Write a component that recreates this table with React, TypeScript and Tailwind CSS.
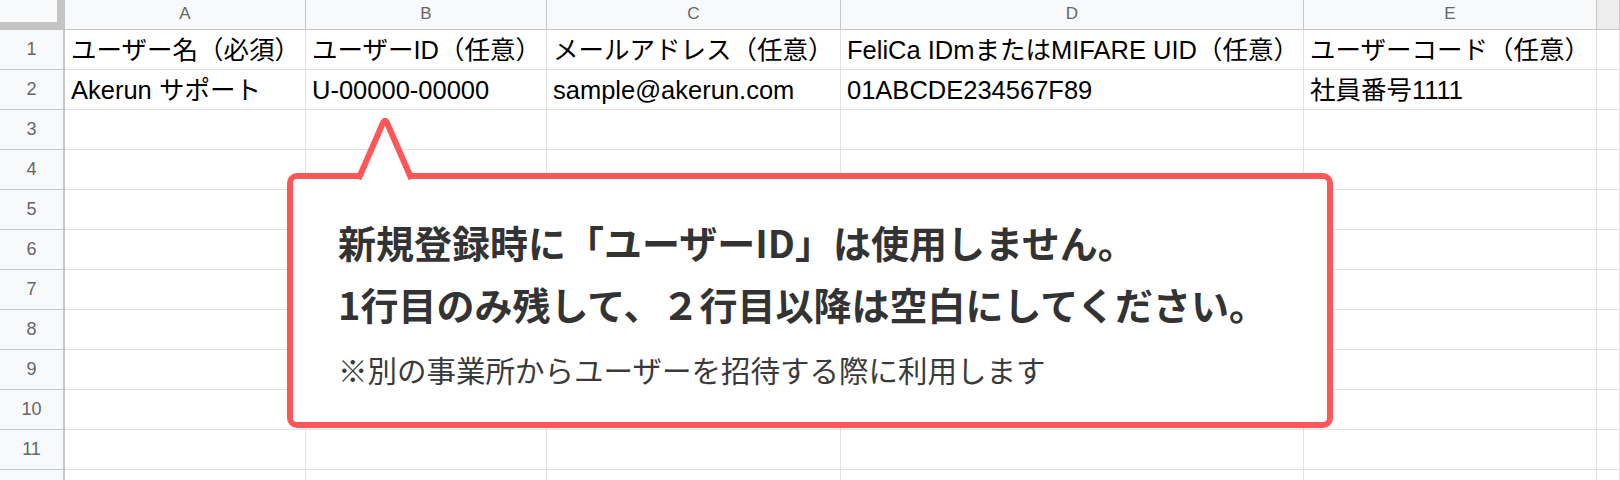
import React from "react";

const columns = ["A", "B", "C", "D", "E", ""];

const data: string[][] = [
  [
    "ユーザー名（必須）",
    "ユーザーID（任意）",
    "メールアドレス（任意）",
    "FeliCa IDmまたはMIFARE UID（任意）",
    "ユーザーコード（任意）",
    "",
  ],
  ["Akerun サポート", "U-00000-00000", "sample@akerun.com", "01ABCDE234567F89", "社員番号1111", ""],
];

const rowCount = 12;

const Sheet = () => {
  const rows = Array.from({ length: rowCount }, (_, i) => data[i] ?? ["", "", "", "", "", ""]);

  return (
    <div className="grid grid-cols-[65px_241px_241px_294px_463px_293px_1fr] font-['Liberation_Sans','Noto_Sans_CJK_JP',sans-serif]">
      {/* corner */}
      <div className="h-[30px] bg-[#f8f9fa] border-r-[8px] border-b-[8px] border-[#c4c4c4]" />
      {columns.map((c, i) => (
        <div
          key={c + i}
          className={`h-[30px] border-r border-b border-[#c7c7c7] text-center text-[17px] leading-[27px] text-[#666666] ${
            i === 5 ? "bg-[#ededed]" : "bg-[#f8f9fa]"
          }`}
        >
          {c}
        </div>
      ))}

      {rows.map((row, r) => (
        <React.Fragment key={r}>
          <div className="h-[40px] bg-[#f8f9fa] border-r-2 border-b border-[#c7c7c7] text-center text-[18px] leading-[39px] text-[#666666]">
            {r + 1}
          </div>
          {row.map((cell, c) => (
            <div
              key={c}
              className="h-[40px] border-r border-b border-[#e2e2e2] pl-[6px] pt-[1px] text-[25.5px] leading-[38px] text-black whitespace-nowrap overflow-hidden"
            >
              {cell}
            </div>
          ))}
        </React.Fragment>
      ))}
    </div>
  );
};

const Callout = () => {
  return (
    <>
      <div className="absolute left-[287px] top-[173px] w-[1046px] h-[255px] bg-white border-[6px] border-[#ff5757] rounded-[10px] pl-[45px] pt-[32px] font-['Noto_Sans_CJK_JP',sans-serif]">
        <p className="text-[38px] leading-[62px] font-bold text-[#333333] whitespace-nowrap">
          新規登録時に「ユーザーID」は使用しません。
        </p>
        <p className="text-[38px] leading-[62px] font-bold text-[#333333] whitespace-nowrap">
          1行目のみ残して、２行目以降は空白にしてください。
        </p>
        <p className="mt-[14px] text-[29.5px] leading-[40px] text-[#3a3a3a] whitespace-nowrap">
          ※別の事業所からユーザーを招待する際に利用します
        </p>
      </div>
      <svg
        className="absolute left-[340px] top-[110px] w-[90px] h-[75px]"
        viewBox="340 110 90 75"
      >
        <path d="M361 180 L385 121 L409 180 Z" fill="#ffffff" />
        <path
          d="M358.5 179 L382.7 123.5 Q385 118 387.3 123.5 L411.5 179"
          fill="none"
          stroke="#ff5757"
          strokeWidth="6"
          strokeLinejoin="round"
        />
      </svg>
    </>
  );
};

export default function App() {
  return (
    <div className="relative w-[1620px] h-[480px] overflow-hidden bg-white">
      <Sheet />
      <Callout />
    </div>
  );
}
